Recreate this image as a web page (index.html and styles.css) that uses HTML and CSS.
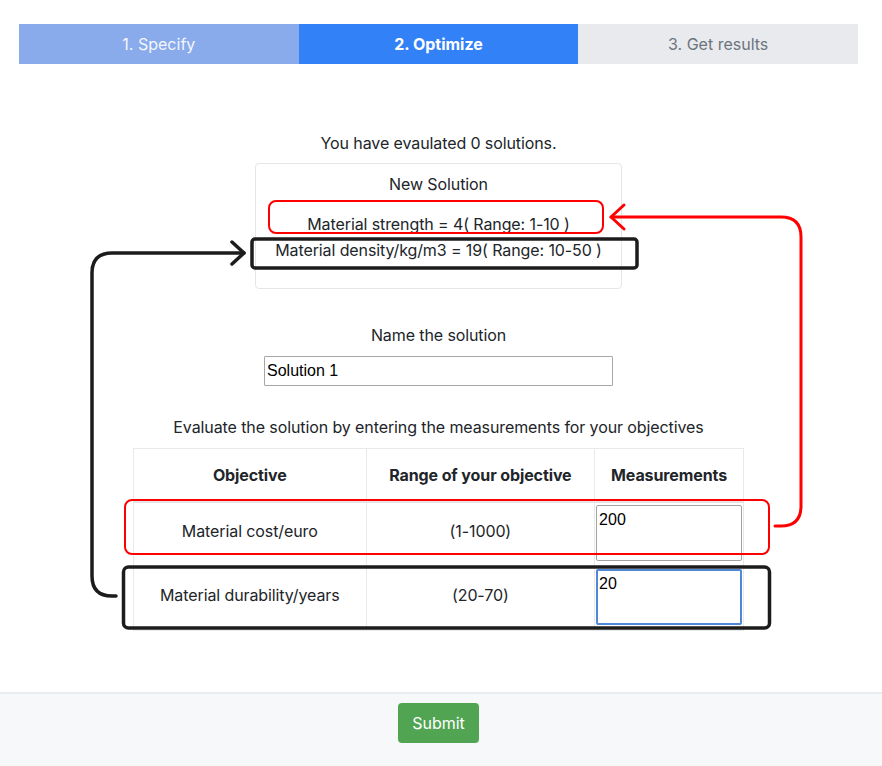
FILE: index.html
```html
<!DOCTYPE html>
<html lang="en">
<head>
<meta charset="utf-8">
<title>Optimize</title>
<link rel="stylesheet" href="styles.css">
</head>
<body>
<div class="page">
  <nav class="steps">
    <div class="step step-done">1. Specify</div>
    <div class="step step-active">2. Optimize</div>
    <div class="step step-todo">3. Get results</div>
  </nav>
  <main class="content">
    <p class="count">You have evaulated 0 solutions.</p>
    <section class="card">
      <h2 class="card-title">New Solution</h2>
      <p class="param param-first">Material strength = 4( Range: 1-10 )</p>
      <p class="param">Material density/kg/m3 = 19( Range: 10-50 )</p>
    </section>
    <p class="label">Name the solution</p>
    <input class="name-input" type="text" value="Solution 1">
    <p class="label label-eval">Evaluate the solution by entering the measurements for your objectives</p>
    <table class="objectives">
      <thead>
        <tr><th class="col-obj">Objective</th><th class="col-range">Range of your objective</th><th class="col-meas">Measurements</th></tr>
      </thead>
      <tbody>
        <tr><td>Material cost/euro</td><td>(1-1000)</td><td class="meas"><textarea class="meas-input">200</textarea></td></tr>
        <tr><td>Material durability/years</td><td>(20-70)</td><td class="meas"><textarea class="meas-input meas-focus">20</textarea></td></tr>
      </tbody>
    </table>
  </main>
</div>
<footer class="footer">
  <div class="footer-inner"><button class="submit" type="button">Submit</button></div>
</footer>
<svg class="annotations" width="882" height="766" viewBox="0 0 882 766" fill="none" stroke-linecap="round" stroke-linejoin="round">
  <rect x="269" y="201" width="334" height="32" rx="7" stroke="#ff0000" stroke-width="2"/>
  <rect x="252" y="239" width="385" height="29" rx="3" stroke="#1c1c1c" stroke-width="3.5"/>
  <rect x="125" y="500" width="644" height="54" rx="7" stroke="#ff0000" stroke-width="2"/>
  <rect x="123.5" y="567" width="646" height="61" rx="5" stroke="#1c1c1c" stroke-width="3.5"/>
  <path d="M775 526 H781 Q801 526 801 506 V237 Q801 217 781 217 H611" stroke="#ff0000" stroke-width="3"/>
  <path d="M624 205 L611 217 L624 229" stroke="#ff0000" stroke-width="3"/>
  <path d="M116 596 H112 Q92 596 92 576 V273 Q92 253 112 253 H244" stroke="#1c1c1c" stroke-width="3.5"/>
  <path d="M232 242 L244 253 L232 264" stroke="#1c1c1c" stroke-width="3.5"/>
</svg>
</body>
</html>
```

FILE: styles.css
```css
html, body {
  margin: 0;
  padding: 0;
}
body {
  font-family: Inter, "Noto Sans", sans-serif;
  font-size: 16px;
  line-height: 24px;
  color: #212529;
  background: #ffffff;
  min-height: 766px;
  position: relative;
}
.page {
  width: 839px;
  margin-left: 19px;
}
.steps {
  display: flex;
  margin-top: 24px;
  height: 40px;
}
.step {
  flex: 1;
  display: flex;
  align-items: center;
  justify-content: center;
  font-size: 16px;
}
.step-done {
  background: #8aabeb;
  color: #f3f6fd;
}
.step-active {
  background: #3381f6;
  color: #ffffff;
  font-weight: 700;
}
.step-todo {
  background: #e9eaee;
  color: #6c757d;
}
.content {
  text-align: center;
  letter-spacing: -0.1px;
}
.count {
  margin: 67px 0 0;
}
.card {
  width: 365px;
  margin: 8px auto 0;
  border: 1px solid #e5e6e8;
  border-radius: 4px;
  padding: 8px 0 25px;
}
.card-title {
  margin: 0;
  font-size: 16px;
  font-weight: 400;
  line-height: 24px;
}
.param {
  margin: 0;
  line-height: 26px;
}
.param-first {
  margin-top: 15px;
}
.label {
  margin: 34px 0 0;
}
.name-input {
  display: block;
  box-sizing: border-box;
  width: 349px;
  height: 30px;
  margin: 9px auto 0;
  padding: 1px 2px;
  border: 1px solid #a7a7a7;
  border-radius: 1px;
  font-family: "Liberation Sans", Arial, sans-serif;
  font-size: 16px;
  letter-spacing: 0;
  color: #000000;
  background: #ffffff;
}
.label-eval {
  margin-top: 29px;
}
.objectives {
  width: 611px;
  margin: 9px auto 0;
  border-collapse: collapse;
  border: 1px solid #e8e9eb;
}
.objectives th,
.objectives td {
  border: 1px solid #e8e9eb;
  text-align: center;
  vertical-align: middle;
  padding: 0;
}
.objectives th {
  height: 52px;
  font-weight: 700;
  border-bottom: 2px solid #e3e5e8;
}
.col-obj { width: 232px; }
.col-range { width: 228px; }
.col-meas { width: 148px; }
.objectives td {
  padding-bottom: 7px;
}
.objectives td.meas {
  vertical-align: top;
  padding: 2px 1px 5px;
}
.meas-input {
  display: block;
  box-sizing: border-box;
  width: 100%;
  height: 56px;
  margin: 0;
  padding: 4px 2px;
  border: 1px solid #a3a3a3;
  border-radius: 2px;
  font-family: "Liberation Sans", Arial, sans-serif;
  font-size: 16px;
  line-height: 20px;
  letter-spacing: 0;
  color: #000000;
  resize: none;
  overflow: hidden;
  background: #ffffff;
  vertical-align: top;
}
.meas-focus {
  border: 2px solid #4f87d9;
  padding: 3px 1px;
}
.footer {
  position: absolute;
  left: 0;
  right: 0;
  bottom: 0;
  height: 72px;
  background: #f7f8fa;
  border-top: 2px solid #ebecef;
}
.footer-inner {
  width: 839px;
  margin-left: 19px;
  display: flex;
  justify-content: center;
  padding-top: 9px;
}
.submit {
  width: 81px;
  height: 40px;
  border: none;
  border-radius: 4px;
  background: #51a452;
  color: #ffffff;
  font-family: Inter, "Noto Sans", sans-serif;
  font-size: 16px;
}
.annotations {
  position: absolute;
  top: 0;
  left: 0;
  pointer-events: none;
}
```
